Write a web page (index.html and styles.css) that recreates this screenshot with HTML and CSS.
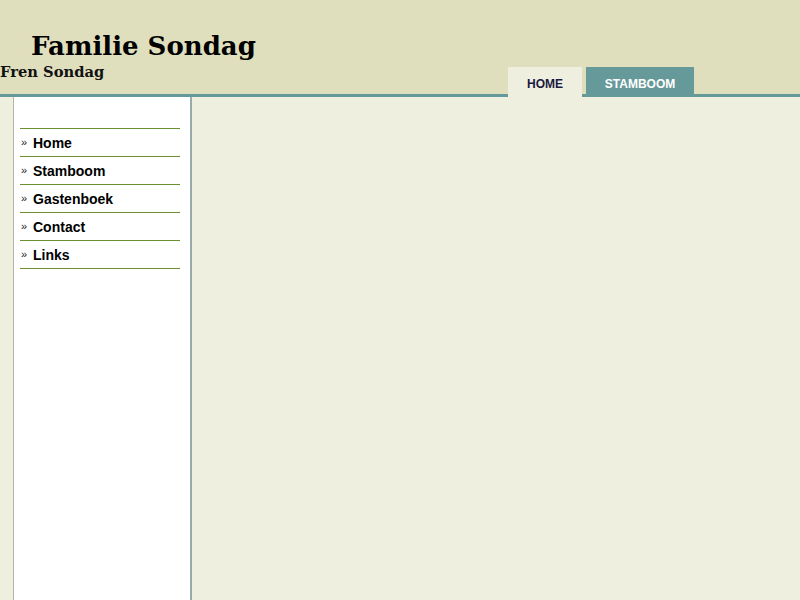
FILE: index.html
```html
<!DOCTYPE html>
<html>
<head>
<meta charset="utf-8">
<link rel="stylesheet" href="styles.css">
</head>
<body>
<div class="header">
  <div class="titles">
    <h1 class="title">Familie Sondag</h1>
    <div class="subtitle">Fren Sondag</div>
  </div>
  <ul class="tabs">
    <li class="tab active">HOME</li>
    <li class="tab">STAMBOOM</li>
  </ul>
</div>
<div class="body">
  <div class="strip"></div>
  <div class="sidebar">
    <ul class="menu">
      <li><span class="raquo">»</span>Home</li>
      <li><span class="raquo">»</span>Stamboom</li>
      <li><span class="raquo">»</span>Gastenboek</li>
      <li><span class="raquo">»</span>Contact</li>
      <li><span class="raquo">»</span>Links</li>
    </ul>
  </div>
  <div class="main"></div>
</div>
</body>
</html>
```

FILE: styles.css
```css
html, body { margin: 0; padding: 0; height: 100%; }
body { background: #efefe0; font-family: "Liberation Sans", Arial, sans-serif; overflow: hidden; }
.header {
  height: 94px;
  background: #dfdfbd;
  border-bottom: 3px solid #669999;
  display: flex;
  justify-content: space-between;
  align-items: flex-end;
}
.titles { align-self: stretch; }
.title {
  margin: 0;
  padding: 30px 0 0 31px;
  font-family: "DejaVu Serif", Georgia, serif;
  font-size: 26px;
  font-weight: bold;
  line-height: 32px;
  color: #000;
}
.subtitle {
  font-family: "DejaVu Serif", Georgia, serif;
  font-weight: bold;
  font-size: 14.7px;
  line-height: 18px;
  margin-top: 1px;
  color: #111;
}
.tabs {
  list-style: none;
  margin: 0 106px -3px 0;
  padding: 0;
  display: flex;
  gap: 4px;
}
.tab {
  height: 30px;
  line-height: 34px;
  font-size: 12px;
  font-weight: bold;
  text-align: center;
  background: #669999;
  color: #fff;
  width: 108px;
}
.tab.active {
  background: #efefe0;
  color: #1a1a40;
  width: 74px;
}
.body { display: flex; height: calc(100% - 97px); }
.strip { width: 13px; border-right: 1px solid #b4b4a4; }
.sidebar {
  width: 170px;
  background: #fff;
  border-right: 2px solid #99aaaa;
  padding: 31px 0 0 6px;
}
.menu { list-style: none; margin: 0; padding: 0; width: 160px; border-top: 1px solid #6b9030; }
.menu li {
  height: 27px;
  line-height: 29px;
  border-bottom: 1px solid #6b9030;
  font-size: 14px;
  font-weight: bold;
  color: #000;
}
.raquo { display: inline-block; width: 12px; padding-left: 1px; font-size: 11px; font-weight: normal; color: #222; vertical-align: top; line-height: 27px; }
.main { flex: 1; }
```
